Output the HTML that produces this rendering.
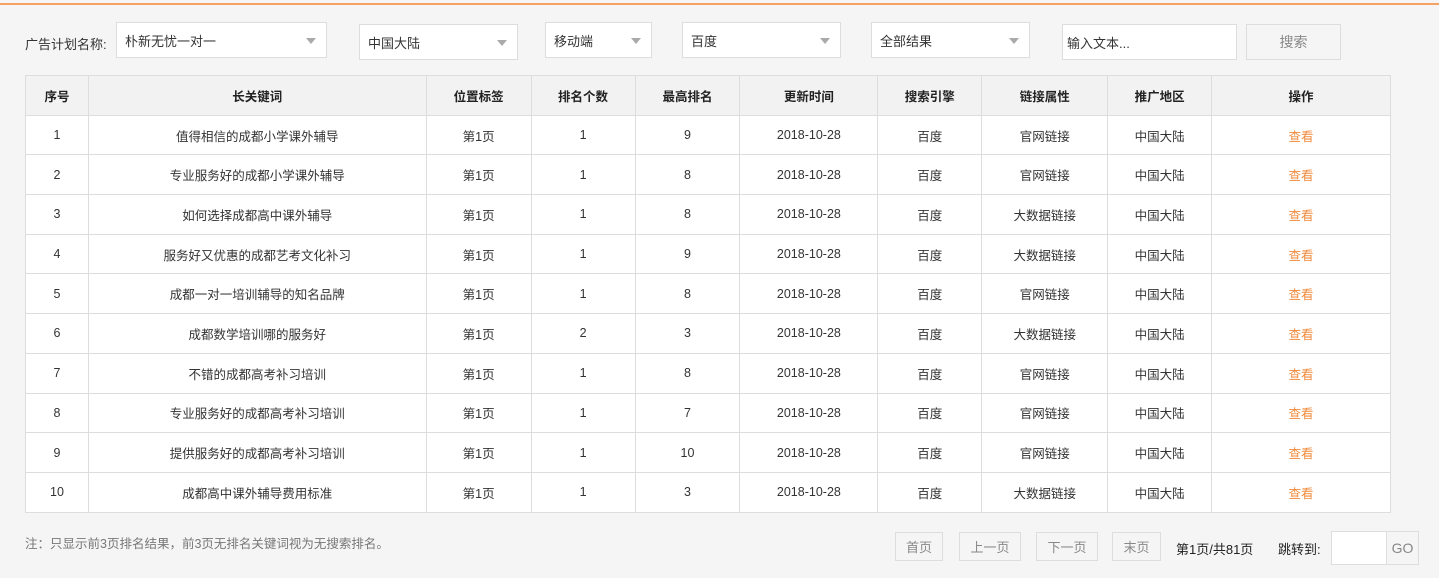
<!DOCTYPE html><html><head><meta charset="utf-8"><style>
*{box-sizing:border-box;margin:0;padding:0}
body{width:1439px;height:578px;background:#f5f5f5;font-family:"Liberation Sans","Noto Sans CJK SC",sans-serif;font-size:13px;color:#333;position:relative;overflow:hidden}
.a{position:absolute}
.top{left:0;top:3px;width:1439px;height:2px;background:#f5a262}
.sel,.inp{position:absolute;background:#fff;border:1px solid #ddd;height:36px;display:flex;align-items:center;padding-left:8px}
.sel:after{content:"";position:absolute;right:10px;top:15px;border-left:5px solid transparent;border-right:5px solid transparent;border-top:6px solid #aaa}
table{position:absolute;left:25px;top:75px;border-collapse:collapse;width:1366px;background:#fff}
td,th{border:1px solid #ddd;text-align:center;height:39.7px;font-size:12.5px;font-weight:normal;vertical-align:middle}
th{background:#f2f2f2;font-weight:bold;color:#222}
td.o{color:#f08a3c}
.pb{position:absolute;top:532px;height:29px;display:flex;align-items:center;justify-content:center;border:1px solid #ddd;color:#888;font-size:13px}
</style></head><body>
<div class="a top"></div>
<div class="a" style="left:25px;top:34px">广告计划名称:</div>
<div class="sel" style="left:116px;top:22px;width:211px">朴新无忧一对一</div>
<div class="sel" style="left:359px;top:24px;width:159px">中国大陆</div>
<div class="sel" style="left:545px;top:22px;width:107px">移动端</div>
<div class="sel" style="left:682px;top:22px;width:159px">百度</div>
<div class="sel" style="left:871px;top:22px;width:159px">全部结果</div>
<div class="inp" style="left:1062px;top:24px;width:175px;padding-left:4px">输入文本...</div>
<div class="a" style="left:1246px;top:24px;width:95px;height:36px;display:flex;align-items:center;justify-content:center;border:1px solid #ddd;color:#888;font-size:14px">搜索</div>
<table>
<colgroup><col style="width:63px"><col style="width:338px"><col style="width:105px"><col style="width:104px"><col style="width:105px"><col style="width:138px"><col style="width:104px"><col style="width:126px"><col style="width:104px"><col style="width:179px"></colgroup>
<tr><th>序号</th><th>长关键词</th><th>位置标签</th><th>排名个数</th><th>最高排名</th><th>更新时间</th><th>搜索引擎</th><th>链接属性</th><th>推广地区</th><th>操作</th></tr>
<tr><td>1</td><td>值得相信的成都小学课外辅导</td><td>第1页</td><td>1</td><td>9</td><td>2018-10-28</td><td>百度</td><td>官网链接</td><td>中国大陆</td><td class="o">查看</td></tr>
<tr><td>2</td><td>专业服务好的成都小学课外辅导</td><td>第1页</td><td>1</td><td>8</td><td>2018-10-28</td><td>百度</td><td>官网链接</td><td>中国大陆</td><td class="o">查看</td></tr>
<tr><td>3</td><td>如何选择成都高中课外辅导</td><td>第1页</td><td>1</td><td>8</td><td>2018-10-28</td><td>百度</td><td>大数据链接</td><td>中国大陆</td><td class="o">查看</td></tr>
<tr><td>4</td><td>服务好又优惠的成都艺考文化补习</td><td>第1页</td><td>1</td><td>9</td><td>2018-10-28</td><td>百度</td><td>大数据链接</td><td>中国大陆</td><td class="o">查看</td></tr>
<tr><td>5</td><td>成都一对一培训辅导的知名品牌</td><td>第1页</td><td>1</td><td>8</td><td>2018-10-28</td><td>百度</td><td>官网链接</td><td>中国大陆</td><td class="o">查看</td></tr>
<tr><td>6</td><td>成都数学培训哪的服务好</td><td>第1页</td><td>2</td><td>3</td><td>2018-10-28</td><td>百度</td><td>大数据链接</td><td>中国大陆</td><td class="o">查看</td></tr>
<tr><td>7</td><td>不错的成都高考补习培训</td><td>第1页</td><td>1</td><td>8</td><td>2018-10-28</td><td>百度</td><td>官网链接</td><td>中国大陆</td><td class="o">查看</td></tr>
<tr><td>8</td><td>专业服务好的成都高考补习培训</td><td>第1页</td><td>1</td><td>7</td><td>2018-10-28</td><td>百度</td><td>官网链接</td><td>中国大陆</td><td class="o">查看</td></tr>
<tr><td>9</td><td>提供服务好的成都高考补习培训</td><td>第1页</td><td>1</td><td>10</td><td>2018-10-28</td><td>百度</td><td>官网链接</td><td>中国大陆</td><td class="o">查看</td></tr>
<tr><td>10</td><td>成都高中课外辅导费用标准</td><td>第1页</td><td>1</td><td>3</td><td>2018-10-28</td><td>百度</td><td>大数据链接</td><td>中国大陆</td><td class="o">查看</td></tr>
</table>
<div class="a" style="left:25px;top:533px;color:#777;font-size:12.5px">注：只显示前3页排名结果，前3页无排名关键词视为无搜索排名。</div>
<div class="pb" style="left:895px;width:48px">首页</div>
<div class="pb" style="left:959px;width:62px">上一页</div>
<div class="pb" style="left:1036px;width:62px">下一页</div>
<div class="pb" style="left:1112px;width:49px">末页</div>
<div class="a" style="left:1176px;top:539px;color:#222">第1页/共81页</div>
<div class="a" style="left:1278px;top:539px;color:#222">跳转到:</div>
<div class="a" style="left:1331px;top:531px;width:56px;height:34px;background:#fff;border:1px solid #ddd"></div>
<div class="a" style="left:1386px;top:531px;width:33px;height:34px;border:1px solid #ddd;display:flex;align-items:center;justify-content:center;color:#888;font-size:14px">GO</div>
</body></html>
